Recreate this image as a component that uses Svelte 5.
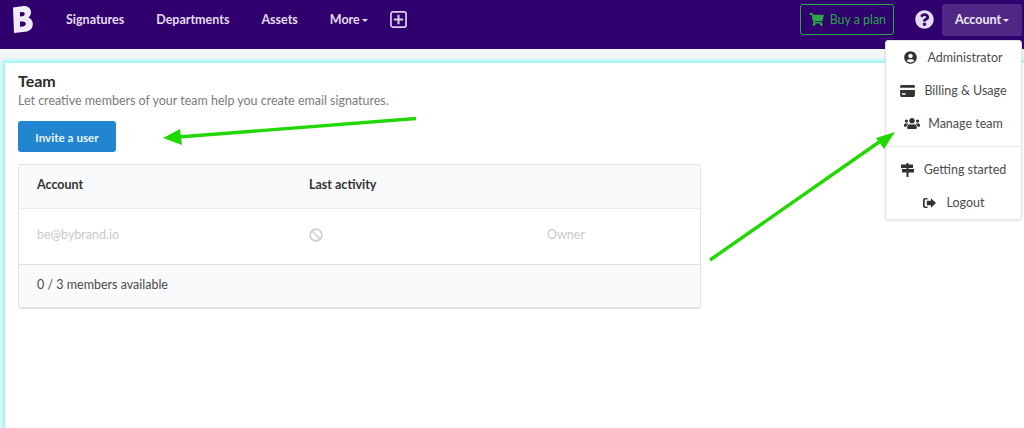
<script>
  const navLinks = ['Signatures', 'Departments', 'Assets'];
</script>

<div class="page">
  <header class="nav">
    <svg class="logo" viewBox="0 0 20 27" aria-hidden="true">
      <path fill-rule="evenodd" fill="#f1ebf8" d="M0 1.500 10.500 0C15.500 0 18 2.600 18 6.300c0 2.300-1 4.200-2.700 5.200 2.700 1 4.500 3.400 4.500 6.500C19.800 23.200 16 26 10 26L1 27ZM7 6.200v4.300l2.400-.2c1.500-.2 2.300-1 2.300-2.200 0-1.300-.9-2.100-2.400-2ZM7 15.500v5.200l3-.3c1.800-.2 2.800-1.100 2.800-2.600 0-1.600-1.100-2.500-3-2.400Z"/>
    </svg>
    <nav class="links">
      {#each navLinks as link}
        <a href="#top" class="link">{link}</a>
      {/each}
      <a href="#top" class="link">More<span class="caret"></span></a>
    </nav>
    <svg class="plus" viewBox="0 0 18 18" aria-hidden="true">
      <rect x="1" y="1" width="16" height="16" rx="2" fill="none" stroke="#dcd0ea" stroke-width="1.800"/>
      <path d="M9 4v10M4 9h10" stroke="#dcd0ea" stroke-width="2.200"/>
    </svg>
    <div class="right">
      <a href="#top" class="buy">
        <svg class="cart" viewBox="0 0 576 512" aria-hidden="true"><path fill="#28a745" d="M528.120 301.319l47.273-208C578.806 78.301 567.391 64 551.990 64H159.208l-9.166-44.810C147.758 8.021 137.930 0 126.529 0H24C10.745 0 0 10.745 0 24v16c0 13.255 10.745 24 24 24h69.883l70.248 343.435C147.325 417.100 136 435.222 136 456c0 30.928 25.072 56 56 56s56-25.072 56-56c0-15.674-6.447-29.835-16.824-40h209.647C430.447 426.165 424 440.326 424 456c0 30.928 25.072 56 56 56s56-25.072 56-56c0-22.172-12.888-41.332-31.579-50.405l5.517-24.276c3.413-15.018-8.002-29.319-23.403-29.319H218.117l-6.545-32h293.145c11.206 0 20.920-7.754 23.403-18.681z"/></svg>
        Buy a plan
      </a>
      <svg class="help" viewBox="0 0 512 512" aria-hidden="true"><path fill="#e6dcf1" d="M504 256c0 136.997-111.043 248-248 248S8 392.997 8 256C8 119.083 119.043 8 256 8s248 111.083 248 248zM262.655 90c-54.497 0-89.255 22.957-116.549 63.758-3.536 5.286-2.353 12.415 2.715 16.258l34.699 26.310c5.205 3.947 12.621 3.008 16.665-2.122 17.864-22.658 30.113-35.797 57.303-35.797 20.429 0 45.698 13.148 45.698 32.958 0 14.976-12.363 22.667-32.534 33.976C247.128 238.528 216 254.941 216 296v4c0 6.627 5.373 12 12 12h56c6.627 0 12-5.373 12-12v-1.333c0-28.462 83.186-29.647 83.186-106.667 0-58.002-60.165-102-116.531-102zM256 338c-25.365 0-46 20.635-46 46 0 25.364 20.635 46 46 46s46-20.636 46-46c0-25.365-20.635-46-46-46z"/></svg>
      <a href="#top" class="account">Account<span class="caret"></span></a>
    </div>
  </header>

  <main class="main">
    <section class="card">
      <h1>Team</h1>
      <p class="sub">Let creative members of your team help you create email signatures.</p>
      <button class="invite">Invite a user</button>
      <div class="table">
        <div class="row head">
          <span class="c1">Account</span>
          <span class="c2">Last activity</span>
        </div>
        <div class="row body">
          <span class="c1">be@bybrand.io</span>
          <span class="c2">
            <svg class="ban" viewBox="0 0 14 14" aria-hidden="true">
              <circle cx="7" cy="7" r="5.800" fill="none" stroke="#cfcfcf" stroke-width="1.700"/>
              <path d="M3 3l8 8" stroke="#cfcfcf" stroke-width="1.700"/>
            </svg>
          </span>
          <span class="c3">Owner</span>
        </div>
        <div class="row foot"><span class="c1">0 / 3 members available</span></div>
      </div>
    </section>
  </main>

  <div class="menu">
    <a href="#top" class="item">
      <svg class="i i-user" viewBox="0 0 496 512" aria-hidden="true"><path d="M248 8C111 8 0 119 0 256s111 248 248 248 248-111 248-248S385 8 248 8zm0 96c48.600 0 88 39.400 88 88s-39.400 88-88 88-88-39.400-88-88 39.400-88 88-88zm0 344c-58.700 0-111.300-26.600-146.500-68.200 18.800-35.400 55.600-59.800 98.500-59.800 2.400 0 4.800.4 7.100 1.100 13 4.200 26.600 6.900 40.900 6.900 14.300 0 28-2.700 40.900-6.900 2.300-.7 4.700-1.100 7.100-1.100 42.900 0 79.700 24.400 98.500 59.800C359.300 421.400 306.700 448 248 448z"/></svg>
      Administrator
    </a>
    <a href="#top" class="item">
      <svg class="i i-card" viewBox="0 0 16 13" aria-hidden="true"><path d="M1.500 0h13A1.500 1.500 0 0 1 16 1.500V3H0V1.500A1.500 1.500 0 0 1 1.500 0ZM0 5.500h16v6a1.500 1.500 0 0 1-1.500 1.500h-13A1.500 1.500 0 0 1 0 11.500ZM2 9v1.500h4V9Z" fill-rule="evenodd"/></svg>
      Billing &amp; Usage
    </a>
    <a href="#top" class="item">
      <svg class="i i-users" viewBox="0 0 640 512" aria-hidden="true"><path d="M96 224c35.300 0 64-28.700 64-64s-28.700-64-64-64-64 28.700-64 64 28.700 64 64 64zm448 0c35.300 0 64-28.700 64-64s-28.700-64-64-64-64 28.700-64 64 28.700 64 64 64zm32 32h-64c-17.600 0-33.500 7.100-45.100 18.600 40.300 22.100 68.900 62 75.100 109.400h66c17.700 0 32-14.300 32-32v-32c0-35.300-28.700-64-64-64zm-256 0c61.900 0 112-50.100 112-112S381.900 32 320 32 208 82.100 208 144s50.100 112 112 112zm76.800 32h-8.300c-20.800 10-43.900 16-68.500 16s-47.600-6-68.500-16h-8.300C179.600 288 128 339.600 128 403.200V432c0 26.500 21.500 48 48 48h288c26.500 0 48-21.500 48-48v-28.800c0-63.600-51.600-115.200-115.200-115.200zm-223.700-13.400C161.500 263.100 145.600 256 128 256H64c-35.300 0-64 28.700-64 64v32c0 17.700 14.300 32 32 32h65.900c6.300-47.400 34.900-87.300 75.200-109.400z"/></svg>
      Manage team
    </a>
    <div class="divider"></div>
    <a href="#top" class="item">
      <svg class="i i-signs" viewBox="0 0 13 14" aria-hidden="true"><path d="M5.500 0h2v1.500H12V5H7.500v1H13v3.500H7.500V14h-2V9.500H1V6h4.500V5H0V1.500h5.500Z"/></svg>
      Getting started
    </a>
    <a href="#top" class="item">
      <svg class="i i-out" viewBox="0 0 13 10" aria-hidden="true"><path d="M4.500 0v1.600H2.200c-.3 0-.5.2-.5.500v5.800c0 .3.200.5.500.5h2.300V10H2C.9 10 0 9.100 0 8V2C0 .9.900 0 2 0ZM8 .2 13 5 8 9.800V7.200H3.800V2.800H8Z"/></svg>
      Logout
    </a>
  </div>

  <svg class="arrows" viewBox="0 0 1024 428" aria-hidden="true">
    <path d="M416 118.500 178 137" stroke="#22d804" stroke-width="3.400"/>
    <path d="M163 138 180 129 182 145Z" fill="#22d804"/>
    <path d="M710 260 882 140" stroke="#22d804" stroke-width="3.400"/>
    <path d="M895 132 876 138 884 149Z" fill="#22d804"/>
  </svg>
</div>

<style>
  :global(body) {
    margin: 0;
    background: #fff;
  }
  .page {
    position: relative;
    width: 1024px;
    height: 428px;
    overflow: hidden;
    font-family: Lato, "Liberation Sans", sans-serif;
    font-size: 14px;
    background: #f3f6f6;
  }
  a {
    text-decoration: none;
    color: inherit;
  }
  .nav {
    display: flex;
    align-items: center;
    height: 49px;
    background: #30006e;
    box-sizing: border-box;
    padding: 0 2px 0 13px;
  }
  .logo {
    width: 20px;
    height: 27px;
    margin-top: -10px;
  }
  .links {
    display: flex;
    gap: 32px;
    margin-left: 33px;
    margin-top: -11px;
  }
  .link {
    color: #e4dcef;
    font-weight: 700;
    font-size: 12.500px;
  }
  .caret {
    display: inline-block;
    margin-left: 2px;
    vertical-align: 2px;
    border-left: 3.500px solid transparent;
    border-right: 3.500px solid transparent;
    border-top: 3.500px solid currentColor;
  }
  .plus {
    width: 17px;
    height: 17px;
    margin-left: 22px;
    margin-top: -11px;
  }
  .right {
    display: flex;
    align-items: center;
    margin-left: auto;
    margin-top: -10px;
  }
  .buy {
    display: flex;
    align-items: center;
    gap: 6px;
    height: 31px;
    box-sizing: border-box;
    padding: 0 7px 0 8px;
    border: 1px solid #28a745;
    border-radius: 3px;
    color: #28a745;
    font-size: 12.400px;
    margin-right: 21px;
  }
  .cart {
    width: 15px;
    height: 13px;
  }
  .help {
    width: 19px;
    height: 19px;
    margin-right: 8px;
  }
  .account {
    display: block;
    width: 80px;
    height: 32px;
    line-height: 31px;
    text-align: center;
    background: #4f2785;
    border-radius: 3px;
    color: #efe9f6;
    font-weight: 700;
    font-size: 12.500px;
  }
  .main {
    padding: 14px 0 0 5px;
  }
  .card {
    height: 380px;
    background: #fff;
    padding: 9px 0 0 13px;
    box-shadow: 0 0 5px 2px #7ff6f6;
  }
  h1 {
    margin: 0;
    font-size: 16px;
    line-height: 18px;
    font-weight: 700;
    color: #2b2b2b;
  }
  .sub {
    margin: 3px 0 0;
    font-size: 12.470px;
    line-height: 16px;
    color: #7b7b7b;
  }
  .invite {
    display: block;
    margin-top: 12px;
    width: 98px;
    height: 31px;
    padding: 0;
    border: none;
    border-radius: 3px;
    background: #2185d0;
    color: #e9f3fb;
    font-family: inherit;
    font-weight: 700;
    font-size: 11.700px;
  }
  .table {
    width: 683px;
    margin-top: 12px;
    box-sizing: border-box;
    border: 1px solid #e1e2e4;
    border-bottom-width: 2px;
    border-radius: 4px;
    overflow: hidden;
  }
  .row {
    display: flex;
    align-items: center;
    box-sizing: border-box;
    padding-bottom: 4px;
    font-size: 12.500px;
  }
  .c1 {
    width: 290px;
    padding-left: 18px;
    box-sizing: border-box;
  }
  .c2 {
    width: 238px;
    display: flex;
  }
  .head {
    height: 44px;
    background: #f9fafb;
    font-weight: 700;
    color: #333;
    border-bottom: 1px solid #ececee;
  }
  .body {
    height: 56px;
    background: #fff;
    color: #c9c9c9;
    border-bottom: 1px solid #dedfe1;
  }
  .foot {
    height: 42px;
    background: #f9fafb;
    color: #4b4b4b;
  }
  .ban {
    width: 14px;
    height: 14px;
  }
  .menu {
    position: absolute;
    left: 885px;
    top: 40px;
    width: 137px;
    height: 180px;
    box-sizing: border-box;
    background: #fff;
    border: 1px solid #e4e4e6;
    border-radius: 3px;
    box-shadow: 0 1px 3px rgba(0, 0, 0, 0.1);
  }
  .item {
    display: flex;
    align-items: center;
    justify-content: center;
    height: 33px;
    color: #4d4d4d;
    font-size: 12.500px;
    white-space: nowrap;
  }
  .i {
    fill: #333;
    flex: none;
  }
  .i-user {
    width: 13px;
    height: 13px;
    margin-right: 10px;
  }
  .i-card {
    width: 15px;
    height: 12px;
    margin-right: 9px;
  }
  .i-users {
    width: 16px;
    height: 13px;
    margin-right: 8px;
  }
  .i-signs {
    width: 13px;
    height: 14px;
    margin-right: 10px;
  }
  .i-out {
    width: 13px;
    height: 10px;
    margin-right: 11px;
  }
  .divider {
    height: 1px;
    margin: 6px 0 6px;
    background: #e8e8ea;
  }
  .arrows {
    position: absolute;
    inset: 0;
    width: 1024px;
    height: 428px;
    pointer-events: none;
  }
</style>
